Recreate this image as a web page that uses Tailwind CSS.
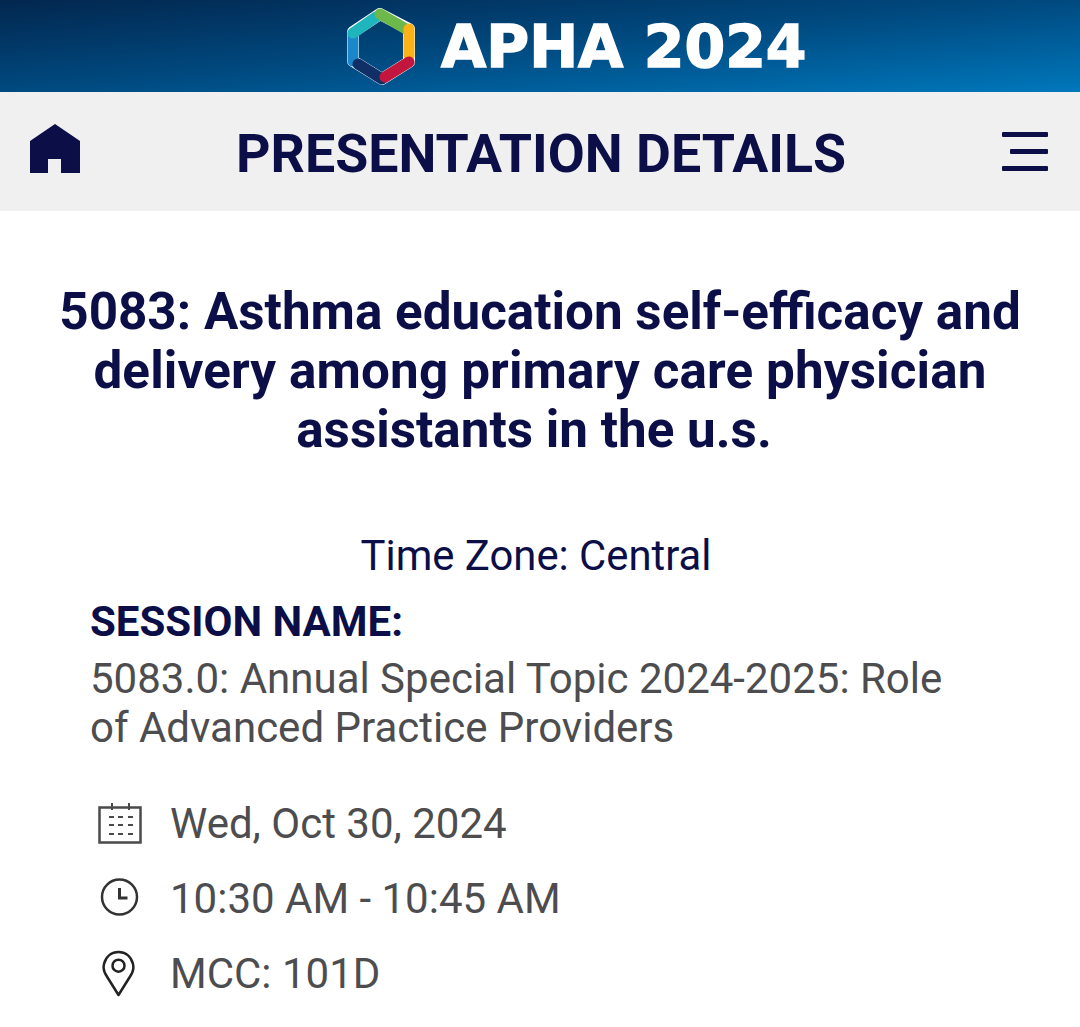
<!DOCTYPE html>
<html lang="en">
<head>
    <meta charset="UTF-8">
    <meta name="viewport" content="width=device-width, initial-scale=1.0">
    <title>Presentation Details</title>
    <script src="https://cdn.jsdelivr.net/npm/@tailwindcss/browser@4"></script>
</head>
<body class="bg-white font-['Roboto',sans-serif] w-[1080px] h-[1027px] overflow-hidden">
    <!-- Banner -->
    <header class="h-[92px] flex items-center bg-gradient-to-br from-[#02274f] via-[#004a80] to-[#0078bc] pl-[346px]">
        <svg width="70" height="78" viewBox="0 0 70 78" fill="none" stroke-linecap="round" stroke-linejoin="round" class="mt-[2px]">
            <path d="M7 24 L7 53 L36 71 L63 54 L63 21 L34 6 Z" stroke="#ffffff" stroke-width="12"/>
            <path d="M7 53 L7 26" stroke="#1b87c9" stroke-width="11"/>
            <path d="M7 25 L30 9" stroke="#1fb5bd" stroke-width="11"/>
            <path d="M34 6 L60 21" stroke="#6cb84a" stroke-width="11"/>
            <path d="M63 21 L63 48" stroke="#fbb216" stroke-width="11"/>
            <path d="M36 71 L12 56" stroke="#0f2f66" stroke-width="11"/>
            <path d="M63 54 L39 69" stroke="#c3163f" stroke-width="11"/>
        </svg>
        <span class="ml-[25px] mt-[2px] font-['DejaVu_Sans',sans-serif] font-bold text-[58.500px] leading-none text-white [-webkit-text-stroke:1.500px_white]">APHA 2024</span>
    </header>

    <!-- Nav -->
    <nav class="h-[119px] bg-[#f0f0f1] flex items-center justify-between pl-[30px] pr-[32px] text-[#0c0e48]">
        <svg width="50" height="49" viewBox="0 0 50 49" class="mt-[-7px]">
            <path fill="#0c0e48" d="M25 0 L50 17 L50 49 L31 49 L31 35 L18 35 L18 49 L0 49 L0 17 Z"/>
        </svg>
        <h1 class="text-[53.700px] leading-none font-bold mt-[5px]">PRESENTATION DETAILS</h1>
        <div class="flex flex-col items-end gap-[12px] w-[46px]">
            <span class="block h-[5px] w-[46px] bg-[#0c0e48] rounded-[1px]"></span>
            <span class="block h-[5px] w-[38px] bg-[#0c0e48] rounded-[1px]"></span>
            <span class="block h-[5px] w-[46px] bg-[#0c0e48] rounded-[1px]"></span>
        </div>
    </nav>

    <!-- Title -->
    <h2 class="mt-[71px] text-center text-[51.200px] leading-[59px] font-bold text-[#0c0e48]">5083: Asthma education self-efficacy and<br><span class="tracking-[0.130px]">delivery among primary care physician</span><br><span class="pr-[12px]">assistants in the u.s.</span></h2>

    <p class="mt-[72px] text-center text-[41.800px] leading-[50px] text-[#0c0e48] pr-[8px]">Time Zone: Central</p>

    <!-- Session -->
    <section class="mt-[16px] pl-[90px]">
        <h3 class="text-[42px] leading-[50px] font-bold text-[#0c0e48]">SESSION NAME:</h3>
        <p class="mt-[7px] text-[42px] leading-[49px] text-[#4d4d4f]">5083.0: Annual Special Topic 2024-2025: Role<br>of Advanced Practice Providers</p>

        <ul class="mt-[47px] flex flex-col gap-[25px] text-[42px] leading-[50px] text-[#4d4d4f]">
            <li class="flex items-center">
                <svg width="80" height="44" viewBox="0 0 80 44" fill="none" stroke="#4a4a4a">
                    <rect x="9.500" y="5.500" width="41" height="35" stroke-width="2.500"/>
                    <path d="M22 1v7M39 1v7" stroke-width="2"/>
                    <path d="M19 15h5M28 15h5M38 15h5M19 23h5M28 23h5M38 23h5M19 32h5M28 32h5M38 32h5" stroke-width="2"/>
                </svg>
                <span>Wed, Oct 30, 2024</span>
            </li>
            <li class="flex items-center">
                <svg width="80" height="44" viewBox="0 0 80 44" fill="none" stroke="#333333" stroke-width="2.500">
                    <circle cx="29.500" cy="20" r="17.500"/>
                    <path d="M29.500 11v10h8" stroke-width="3"/>
                </svg>
                <span>10:30 AM - 10:45 AM</span>
            </li>
            <li class="flex items-center">
                <svg width="80" height="50" viewBox="0 0 80 50" fill="none" stroke="#222222" stroke-width="2.500">
                    <path d="M28.500 46 L16 26 C13 21 13.500 17 14 15 C16 7 22 3 28.500 3 C35 3 41 7 43 15 C43.500 17 44 21 41 26 Z" stroke-linejoin="round"/>
                    <circle cx="28.500" cy="16.700" r="6"/>
                </svg>
                <span>MCC: 101D</span>
            </li>
        </ul>
    </section>
</body>
</html>
